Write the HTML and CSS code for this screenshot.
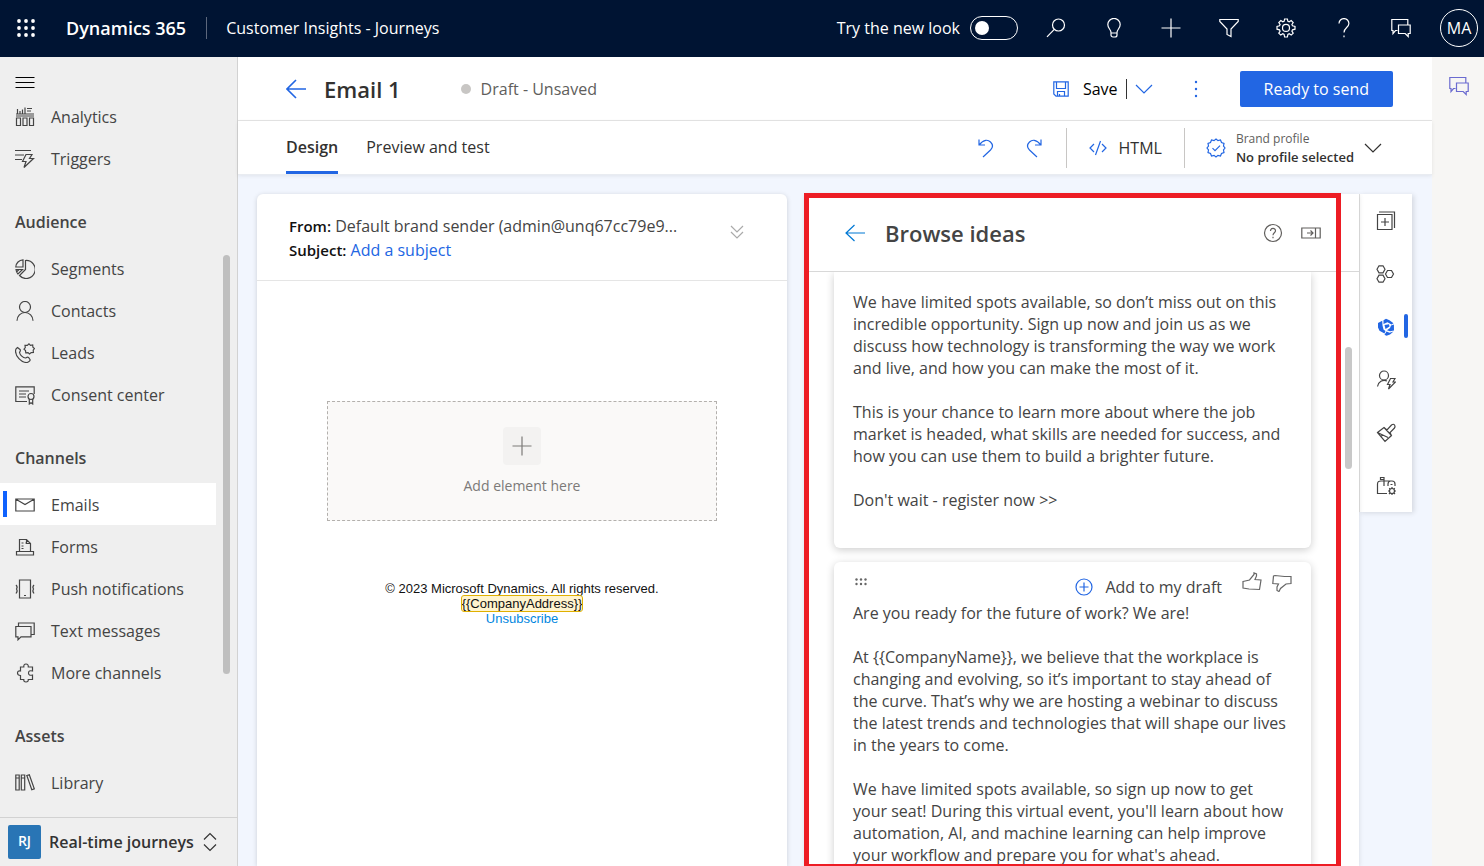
FILE: index.html
```html
<!DOCTYPE html>
<html lang="en">
<head>
<meta charset="utf-8">
<meta name="viewport" content="width=device-width, initial-scale=1">
<title>Email 1 - Customer Insights - Journeys</title>
<link rel="stylesheet" href="styles.css">
</head>
<body>
<header class="topbar">
  <button class="icon-btn waffle" aria-label="App launcher">
    <svg class="fill" width="20" height="20" viewBox="0 0 20 20"><g><circle cx="3" cy="3" r="1.900"/><circle cx="10" cy="3" r="1.900"/><circle cx="17" cy="3" r="1.900"/><circle cx="3" cy="10" r="1.900"/><circle cx="10" cy="10" r="1.900"/><circle cx="17" cy="10" r="1.900"/><circle cx="3" cy="17" r="1.900"/><circle cx="10" cy="17" r="1.900"/><circle cx="17" cy="17" r="1.900"/></g></svg>
  </button>
  <a class="brand" href="#">Dynamics 365</a>
  <a class="app-name" href="#">Customer Insights - Journeys</a>
  <label class="look"><span>Try the new look</span><input class="toggle" type="checkbox" role="switch"></label>
  <div class="top-icons">
    <button class="icon-btn" aria-label="Search"><svg width="20" height="20" viewBox="0 0 20 20"><circle cx="12.500" cy="7" r="6"/><path d="M8.300 11.300 1 18.800"/></svg></button>
    <button class="icon-btn" aria-label="Tips"><svg width="20" height="20" viewBox="0 0 20 20"><path d="M7 14.500C7 11.500 3.800 10.300 3.800 6.600a6.200 6.200 0 0 1 12.400 0C16.200 10.300 13 11.500 13 14.500v2.500a2 2 0 0 1-2 2H9a2 2 0 0 1-2-2zM7 15h6"/></svg></button>
    <button class="icon-btn" aria-label="New"><svg width="20" height="20" viewBox="0 0 20 20"><path d="M10 .5v19M.5 10h19"/></svg></button>
    <button class="icon-btn" aria-label="Filter"><svg width="20" height="20" viewBox="0 0 20 20"><path d="M.8 1.500h18.400v2L12 11v7.500l-4-2V11L.8 3.500z"/></svg></button>
    <button class="icon-btn" aria-label="Settings"><svg width="20" height="20" viewBox="0 0 20 20"><path d="M8.600 1h2.800l.5 2.300 1.300.5 2-1.300 2 2-1.300 2 .6 1.300 2.500.6v2.800l-2.500.6-.6 1.300 1.300 2-2 2-2-1.300-1.300.6-.5 2.600H8.600l-.5-2.600-1.300-.6-2 1.300-2-2 1.300-2-.6-1.300L1 11.200V8.400l2.500-.6.6-1.300-1.300-2 2-2 2 1.300 1.300-.5z"/><circle cx="10" cy="9.900" r="3.500"/></svg></button>
    <button class="icon-btn" aria-label="Help"><svg width="20" height="20" viewBox="0 0 20 20"><path d="M5 5.500A4.800 4.800 0 0 1 14.900 5.500C14.900 9.500 10 9.500 10 14.500M10 17.500v1.800"/></svg></button>
    <button class="icon-btn" aria-label="Assistant"><svg width="20" height="20" viewBox="0 0 20 20"><path d="M6.500 12.500h-2l-2.500 3v-3H.8v-11h16v5M7.500 7h11.700v8.500h-2v3l-3-3H7.500z"/></svg></button>
  </div>
  <button class="avatar" aria-label="Account manager">MA</button>
</header>

<div class="shell">
  <aside class="sidebar">
    <button class="icon-btn burger" aria-label="Toggle navigation"><svg width="20" height="12" viewBox="0 0 20 12"><path d="M.5 1.500h19M.5 6.500h19M.5 11.500h19"/></svg></button>
    <nav class="nav" aria-label="Site map">
      <a class="nav-item" href="#"><svg width="20" height="20" viewBox="0 0 20 20"><path d="M1 9h18M1 7h18M2.500 2v5M5 4v3M7.500 2.500V7M10 .5V7M12 1.500h5M12 4h4M1.500 11h4v7.500h-4zM8 11h4v7.500H8zM14.500 11h4v7.500h-4z"/></svg>Analytics</a>
      <a class="nav-item" href="#"><svg width="20" height="20" viewBox="0 0 20 20"><path d="M0 1.500h16M0 6h9M0 10.500h7M11 5.500h6l-2.500 4h4L9 18.500l2-6H7.500z"/></svg>Triggers</a>
      <h2 class="nav-title">Audience</h2>
      <a class="nav-item" href="#"><svg width="20" height="20" viewBox="0 0 20 20"><path d="M10.500 1.500v9l-6 6A9 9 0 1 0 10.500 1.500zM8 .8V8H.8A7.500 7.500 0 0 1 8 .8zM1 10.500h6.500L3 15A8 8 0 0 1 1 10.500zM1.500 13 4 10.500"/></svg>Segments</a>
      <a class="nav-item" href="#"><svg width="20" height="20" viewBox="0 0 20 20"><circle cx="10" cy="6" r="5.500"/><path d="M2 19.800a8 8.300 0 0 1 16 0"/></svg>Contacts</a>
      <a class="nav-item" href="#"><svg width="20" height="20" viewBox="0 0 20 20"><path d="M2.500 4.500 5 6.500c1 1 0 2-.5 3C5 12 8 15 10.500 15c1-.5 2-1.500 3-.5l1.500 2c.5 1-1.500 3-3.500 3C6 19.500.5 13 .5 8c0-2 1-3 2-3.500zM14 .8l1.500 1.600 2.200-.4.200 2.200 1.600 1.300-1.300 1.700.2 2.200-2.200.2L14.500 11l-1.500-1.400-2.200.2-.3-2.200L9 6.200l1.300-1.700L10 2.300l2.300.1z"/></svg>Leads</a>
      <a class="nav-item" href="#"><svg width="20" height="20" viewBox="0 0 20 20"><path d="M12 16.500H.8V1.800h18.400V9M4 6h10M4 9h7M4 12h7"/><circle cx="16" cy="11.500" r="3"/><path d="M14.300 14v5l1.700-1.200 1.700 1.200v-5"/></svg>Consent center</a>
      <h2 class="nav-title">Channels</h2>
      <a class="nav-item active" href="#" aria-current="page"><svg width="20" height="20" viewBox="0 0 20 20"><path d="M.8 4h18.400v12H.8zM1 4.300l9 5.200 9-5.200"/></svg>Emails</a>
      <a class="nav-item" href="#"><svg width="20" height="20" viewBox="0 0 20 20"><path d="M4.500 14V2.500h7l4 4V14M11.500 2.500v4h4M1.500 14.500h17v3.500h-17zM6.500 6h2M6.500 9h2M10 6h.5M6.500 11.500h2"/></svg>Forms</a>
      <a class="nav-item" href="#"><svg width="20" height="20" viewBox="0 0 20 20"><path d="M4.500 1h11v18h-11zM9 16.500h2M1 6q2 2 .5 4Q3 12 1 14.500M19 6q-2 2-.5 4-1.500 2 .5 4.500"/></svg>Push notifications</a>
      <a class="nav-item" href="#"><svg width="20" height="20" viewBox="0 0 20 20"><path d="M3.500 5.500V2h15.700v11.500H16M.8 5.500H16v10.300H6l-3 3v-3H.8z"/></svg>Text messages</a>
      <a class="nav-item" href="#"><svg width="20" height="20" viewBox="0 0 20 20"><path d="M5.500 4h3.300Q8.500 1 11 1t2.300 3h4.200v4q-4-1-4 2t4 2v4.500h-4.200Q13.500 19 11 19t-2.200-2.500H5.500V12.500Q2.500 12.500 2.500 10t3-2z"/></svg>More channels</a>
      <h2 class="nav-title">Assets</h2>
      <a class="nav-item" href="#"><svg width="20" height="20" viewBox="0 0 20 20"><path d="M.8 2h3.400v15H.8zM6.300 2h3.400v15H6.300zM11.800 2.500l2.500-.7 5 14-2.500 1zM1 5h3M6.500 5h3"/></svg>Library</a>
    </nav>
    <div class="nav-thumb"></div>
    <button class="area">
      <span class="area-badge">RJ</span><span>Real-time journeys</span>
      <svg width="16" height="20" viewBox="0 0 16 20"><path d="m2 7.500 6-6 6 6M2 12.500l6 6 6-6"/></svg>
    </button>
  </aside>

  <main class="main">
    <div class="commandbar">
      <button class="icon-btn blue" aria-label="Back"><svg class="thick" width="20" height="20" viewBox="0 0 20 20"><path d="M20 10H1M10 1 1 10l9 9"/></svg></button>
      <h1 class="title">Email 1</h1>
      <span class="status">Draft - Unsaved</span>
      <div class="save-group">
        <button class="save"><svg class="blue" width="16" height="16" viewBox="0 0 16 16"><path d="M1 .8h14.200v14.400H3L.8 13V.8zM3.500 1v6.500h9V1M4.500 15v-4.500h7V15M6.500 13v2"/></svg>Save</button>
        <button class="icon-btn save-more blue" aria-label="More save options"><svg width="18" height="12" viewBox="0 0 18 12"><path d="m1 2 8 8 8-8"/></svg></button>
      </div>
      <button class="icon-btn dots blue" aria-label="More commands"><svg class="fill" width="4" height="18" viewBox="0 0 4 18"><circle cx="2" cy="2" r="1.200"/><circle cx="2" cy="9" r="1.200"/><circle cx="2" cy="16" r="1.200"/></svg></button>
      <button class="primary">Ready to send</button>
    </div>
    <div class="tabbar">
      <div class="tabs" role="tablist">
        <button class="tab selected" role="tab" aria-selected="true">Design</button>
        <button class="tab" role="tab" aria-selected="false">Preview and test</button>
      </div>
      <div class="history">
        <button class="icon-btn blue" aria-label="Undo"><svg width="18" height="20" viewBox="0 0 18 20"><path d="M2 1.500V7h6M2 7c5-6 9-5.500 11.500-3s2.500 5.500 0 8L6 19"/></svg></button>
        <button class="icon-btn blue" aria-label="Redo"><svg width="18" height="20" viewBox="0 0 18 20"><path d="M16 1.500V7h-6M16 7c-5-6-9-5.500-11.500-3s-2.500 5.500 0 8L12 19"/></svg></button>
      </div>
      <button class="html-btn"><svg class="blue" width="18" height="16" viewBox="0 0 18 16"><path d="M5 4 1 8l4 4M13 4l4 4-4 4M11.500 1l-5 14"/></svg>HTML</button>
      <button class="profile">
        <svg class="blue" width="20" height="20" viewBox="0 0 20 20"><path d="m10 1 2 1.600 2.500-.6 1 2.500 2.500.9-.5 2.600L19 10l-1.500 2 .5 2.600-2.500.9-1 2.500-2.500-.6L10 19l-2-1.600-2.500.6-1-2.500-2.500-.9.500-2.600L1 10l1.500-2L2 5.400l2.500-.9 1-2.500 2.500.6zM6.500 10.200l2.500 2.500 5-5"/></svg>
        <span class="profile-text"><span class="profile-label">Brand profile</span><strong>No profile selected</strong></span>
        <svg width="18" height="12" viewBox="0 0 18 12"><path d="m1 2 8 8 8-8"/></svg>
      </button>
    </div>

    <div class="canvas">
      <section class="email" aria-label="Email content">
        <div class="email-head">
          <div class="email-meta">
            <div class="sender"><b>From:</b> Default brand sender (admin@unq67cc79e9...</div>
            <div><b>Subject:</b> <a href="#">Add a subject</a></div>
          </div>
          <button class="icon-btn expand" aria-label="Expand header"><svg width="14" height="14" viewBox="0 0 14 14"><path d="m1 1 6 6 6-6M1 7l6 6 6-6"/></svg></button>
        </div>
        <div class="email-body">
          <button class="drop">
            <span class="drop-plus"><svg width="20" height="20" viewBox="0 0 20 20"><path d="M10 .5v19M.5 10h19"/></svg></span>
            Add element here
          </button>
          <div class="email-footer">
            <div>© 2023 Microsoft Dynamics. All rights reserved.</div>
            <div><span class="token">{{CompanyAddress}}</span></div>
            <div><a href="#">Unsubscribe</a></div>
          </div>
        </div>
      </section>

      <section class="panel" aria-label="Browse ideas">
        <div class="panel-head">
          <button class="icon-btn azure" aria-label="Back"><svg width="20" height="18" viewBox="0 0 20 18"><path d="M20 9H1M9.500 1 1 9l8.500 8"/></svg></button>
          <h2 class="panel-title">Browse ideas</h2>
          <button class="icon-btn" aria-label="Help"><svg width="20" height="20" viewBox="0 0 20 20"><circle cx="10" cy="10" r="8.500"/><path d="M7.500 8a2.500 2.500 0 0 1 5-.2c0 2-2.500 2-2.500 4.400M10 13.800v1.400"/></svg></button>
          <button class="icon-btn" aria-label="Collapse pane"><svg width="20" height="12" viewBox="0 0 20 12"><path d="M.8 1h18.400v10H.8zM14.500 1v10M6 6h6M9.500 3.500 12 6 9.500 8.500"/></svg></button>
        </div>
        <div class="ideas">
          <article class="idea idea-first">
            <p>We have limited spots available, so don’t miss out on this incredible opportunity. Sign up now and join us as we discuss how technology is transforming the way we work and live, and how you can make the most of it.</p>
            <p>This is your chance to learn more about where the job market is headed, what skills are needed for success, and how you can use them to build a brighter future.</p>
            <p>Don't wait - register now &gt;&gt;</p>
          </article>
          <article class="idea">
            <div class="idea-bar">
              <svg class="fill grip" width="12" height="8" viewBox="0 0 12 8"><g><circle cx="1.500" cy="1.500" r="1.200"/><circle cx="6" cy="1.500" r="1.200"/><circle cx="10.500" cy="1.500" r="1.200"/><circle cx="1.500" cy="6" r="1.200"/><circle cx="6" cy="6" r="1.200"/><circle cx="10.500" cy="6" r="1.200"/></g></svg>
              <button class="add-draft"><svg class="blue" width="18" height="18" viewBox="0 0 18 18"><circle cx="9" cy="9" r="8"/><path d="M9 4.500v9M4.500 9h9"/></svg>Add to my draft</button>
              <div class="votes">
                <button class="icon-btn" aria-label="Like"><svg width="20" height="20" viewBox="0 0 20 20"><path d="M1 9.500 7.500 8 12 2.500V1l2.500 1v2L13 7.500l6 .5-1.500 9.500L7 17l-6-1z"/></svg></button>
                <button class="icon-btn" aria-label="Dislike"><svg width="20" height="20" viewBox="0 0 20 20"><path d="M1.500 4 3 3.500 12.500 4.500 19 4.500v7l-5 .5L8.500 16.500 7 19.500 5 18.500v-3.500L6.500 12 .8 11.500z"/></svg></button>
              </div>
            </div>
            <p>Are you ready for the future of work? We are!</p>
            <p>At {{CompanyName}}, we believe that the workplace is changing and evolving, so it’s important to stay ahead of the curve. That’s why we are hosting a webinar to discuss the latest trends and technologies that will shape our lives in the years to come.</p>
            <p>We have limited spots available, so sign up now to get your seat! During this virtual event, you'll learn about how automation, AI, and machine learning can help improve your workflow and prepare you for what's ahead.</p>
          </article>
        </div>
        <div class="panel-thumb"></div>
        <div class="highlight"></div>
      </section>

      <div class="toolbox" role="toolbar" aria-label="Toolbox">
        <button class="tool" aria-label="Elements"><svg width="20" height="20" viewBox="0 0 20 20"><path d="M1.500 3.500h14.500v15H1.500zM3 1h15.500v16M9 7v8M5 11h8"/></svg></button>
        <button class="tool" aria-label="Conditions"><svg width="20" height="20" viewBox="0 0 20 20"><path d="M3 1.800h4L9 5.300 7 8.800H3L1 5.300zM3 11.200h4l2 3.500-2 3.500H3l-2-3.500zM11.500 6.500h4l2 3.500-2 3.500h-4l-2-3.500z"/></svg></button>
        <button class="tool current" aria-label="Browse ideas"><svg class="fill" width="18" height="18" viewBox="0 0 18 18"><path d="M9 .8 12.500 2.200 16.500 5.200 14.500 6.500 10.500 4.200 6.500 6V2.200zM5.200 2.800 5.500 7.500 6.500 11.500 8.500 13 7.500 15.500 2.500 12.800 1 9.500V5zM16.900 6.500 17 12.500l-4 .8-3-1 3-2.300 1-2.500zM7.500 7l4.500-.7.5 2.200L8.500 11zM9.500 13.500l3 1.200 4-1.200-3.500 3-3.500 1.200-2-1z"/></svg></button>
        <button class="tool" aria-label="Personalization"><svg width="20" height="20" viewBox="0 0 20 20"><circle cx="8" cy="5.500" r="4.500"/><path d="M1.500 16.500A6.800 7 0 0 1 11 11M14.500 8.500H19l-2 3.500h2.500L12.500 19l1.500-4.500h-2.500z"/></svg></button>
        <button class="tool" aria-label="Theme"><svg width="20" height="20" viewBox="0 0 20 20"><path d="M1.500 9.500 8 4.500l3 2.500L15.500 2q2-1.500 3 0t0 3L14 9.500l1.500 3L9 18.500zM8 4.500l7.500 8M1.500 9.500l10.500 5M5 13l2.500-.8"/></svg></button>
        <button class="tool" aria-label="Email settings"><svg width="20" height="20" viewBox="0 0 20 20"><path d="M11 17.500H1.500V8Q1.500 5 5 5h11q3 0 3 3v2M8 10V1.500H4.500v2H8M12 10V8q0-2.500 2.500-3M14.500 8.500h2"/><circle cx="16" cy="15" r="2.500"/><path d="M16 11v1.500M16 17.500V19M12 15h1.500M18.500 15H20M13.200 12.200l1 1M18 17l1 1M18.800 12.200l-1 1M14 17l-1 1"/></svg></button>
      </div>
    </div>
  </main>

  <aside class="rail"><button class="icon-btn purple" aria-label="Copilot"><svg width="20" height="20" viewBox="0 0 20 20"><path d="M6.500 12.500h-2l-2.500 3v-3H.8v-11h16v5M7.500 7h11.700v8.500h-2v3l-3-3H7.500z"/></svg></button></aside>
</div>
</body>
</html>
```
FILE: styles.css
```css
* { box-sizing: border-box; }

body {
  margin: 0;
  height: 100vh;
  display: flex;
  flex-direction: column;
  overflow: hidden;
  font-family: "Open Sans", "Noto Sans", sans-serif;
  font-size: 16px;
  line-height: 22px;
  color: #444;
  background: #fff;
}

button {
  font: inherit;
  color: inherit;
  background: none;
  border: 0;
  padding: 0;
  cursor: pointer;
}

a { color: inherit; text-decoration: none; }
h1, h2, p { margin: 0; }

svg {
  display: block;
  flex: none;
  fill: none;
  stroke: currentColor;
  stroke-width: 1.2;
}
svg.fill { fill: currentColor; stroke: none; }
svg.thick { stroke-width: 1.6; }

.icon-btn { display: flex; align-items: center; justify-content: center; }
.blue { color: #2266e3; }
.azure { color: #0078d4; }
.purple { color: #6b6bd0; }

/* Top bar */
.topbar {
  flex: none;
  height: 57px;
  display: flex;
  align-items: center;
  padding: 0 6px 1px 16px;
  color: #fff;
  background: #001433;
}
.brand {
  margin-left: 30px;
  padding-right: 20px;
  border-right: 1px solid #5c677c;
  font-size: 18px;
  font-weight: 600;
}
.app-name { margin-left: 19px; }
.look { margin-left: auto; display: flex; align-items: center; gap: 10px; }
.toggle {
  appearance: none;
  display: flex;
  align-items: center;
  width: 48px;
  height: 24px;
  margin: 0;
  padding: 0 4px;
  border: 1px solid #fff;
  border-radius: 12px;
}
.toggle::before {
  content: "";
  width: 14px;
  height: 14px;
  border-radius: 50%;
  background: #fff;
}
.toggle:checked { justify-content: flex-end; }
.top-icons {
  width: 365px;
  margin: 0 29px 0 28px;
  display: flex;
  justify-content: space-between;
}
.avatar {
  width: 38px;
  height: 38px;
  border: 1px solid #fff;
  border-radius: 50%;
}

.shell { flex: 1; min-height: 0; display: flex; }

/* Site map */
.sidebar {
  position: relative;
  flex: none;
  width: 238px;
  display: flex;
  flex-direction: column;
  border-right: 1px solid #d2d2d2;
  background: #efefef;
}
.burger { width: 20px; height: 38px; margin-left: 15px; padding-top: 12px; color: #000; }
.nav { flex: 1; min-height: 0; overflow: hidden; margin-right: 21px; }
.nav-item {
  position: relative;
  height: 42px;
  display: flex;
  align-items: center;
  gap: 16px;
  padding: 1px 0 0 15px;
}
.nav-title {
  height: 68px;
  padding: 32px 15px 0;
  font-size: 16px;
  font-weight: 600;
}
.active { background: #fff; }
.active::before {
  content: "";
  position: absolute;
  left: 3px;
  top: 8px;
  bottom: 8px;
  width: 4px;
  background: #0f62fe;
}
.nav-thumb {
  position: absolute;
  right: 7px;
  top: 198px;
  bottom: 192px;
  width: 7px;
  border-radius: 4px;
  background: #bfbfbf;
}
.area {
  height: 49px;
  display: flex;
  align-items: center;
  gap: 8px;
  padding: 0 8px;
  border-top: 1px solid #d2d2d2;
  font-weight: 600;
  color: #333;
}
.area-badge {
  width: 33px;
  height: 34px;
  border-radius: 2px;
  font-size: 14px;
  line-height: 32px;
  color: #fff;
  background: #2975b5;
}

/* Form header */
.main { flex: 1; min-width: 0; display: flex; flex-direction: column; }
.commandbar {
  flex: none;
  height: 64px;
  display: flex;
  align-items: center;
  padding: 0 39px 0 48px;
  border-bottom: 1px solid #e5e5e5;
}
.title { margin-left: 18px; font-size: 22px; font-weight: 600; line-height: 30px; color: #323130; }
.status { display: flex; align-items: center; gap: 10px; margin-left: 60px; color: #605e5c; }
.status::before { content: ""; width: 10px; height: 10px; border-radius: 50%; background: #c8c6c4; }
.save-group { margin-left: auto; display: flex; align-items: center; gap: 8px; }
.save { display: flex; align-items: center; gap: 14px; color: #000; }
.save-more { height: 20px; padding-left: 8px; border-left: 1px solid #333; }
.dots { margin-left: 41px; }
.primary {
  height: 36px;
  margin-left: 42px;
  padding: 0 24px;
  border-radius: 2px;
  color: #fff;
  background: #2266e3;
}
.tabbar {
  position: relative;
  flex: none;
  height: 54px;
  display: flex;
  align-items: center;
  padding: 0 50px 0 48px;
  border-bottom: 1px solid #e9ecf1;
  box-shadow: 0 1px 4px rgba(0, 0, 0, .08);
  background: #fff;
}
.tabs { align-self: stretch; display: flex; gap: 28px; margin-right: auto; }
.tab { padding-top: 2px; border-bottom: 3px solid transparent; color: #323130; }
.selected { border-bottom-color: #2266e3; font-weight: 600; }
.history { display: flex; gap: 30px; padding-right: 23px; }
.html-btn, .profile { height: 40px; display: flex; align-items: center; border-left: 1px solid #c8c6c4; color: #323130; }
.html-btn { gap: 12px; padding: 0 22px; }
.profile { gap: 10px; padding-left: 21px; }
.profile-text { display: flex; flex-direction: column; text-align: left; font-size: 13px; line-height: 18px; }
.profile-label { font-size: 12px; color: #605e5c; }
.profile strong { font-weight: 600; }

/* Designer */
.canvas {
  flex: 1;
  min-height: 0;
  display: flex;
  padding: 19px 20px 0 19px;
  background: #f2f6fe;
}
.email {
  flex: 1;
  min-width: 0;
  margin-right: 18px;
  border-radius: 6px 6px 0 0;
  box-shadow: 0 1px 5px rgba(0, 0, 0, .16);
  background: #fff;
}
.email-head {
  height: 87px;
  display: flex;
  align-items: center;
  padding: 2px 43px 0 32px;
  border-bottom: 1px solid #e5e5e5;
}
.email-meta { flex: 1; min-width: 0; line-height: 24px; }
.sender { white-space: nowrap; }
.email-meta b { font-size: 15px; font-weight: 600; color: #111; }
.email-meta a { color: #2266e3; }
.expand { margin-bottom: 12px; color: #aaa; }
.email-body { padding: 120px 70px 0; }
.drop {
  width: 100%;
  height: 120px;
  display: flex;
  flex-direction: column;
  align-items: center;
  justify-content: center;
  gap: 10px;
  padding-top: 2px;
  border: 1px dashed #b3b0ad;
  font-size: 14px;
  color: #7c7a78;
  background: #faf9f8;
}
.drop-plus { padding: 9px; border-radius: 4px; background: #f3f2f1; }
.email-footer {
  margin-top: 60px;
  text-align: center;
  font: 13px/15px "Liberation Sans", Arial, sans-serif;
  color: #111;
}
.email-footer a { color: #0086e0; }
.token { border-radius: 2px; outline: 1px solid #e0b000; background: #fff4ce; }

.panel {
  position: relative;
  flex: none;
  width: 554px;
  display: flex;
  flex-direction: column;
  box-shadow: 0 1px 5px rgba(0, 0, 0, .12);
  background: #fff;
}
.panel-head {
  flex: none;
  height: 78px;
  display: flex;
  align-items: center;
  gap: 18px;
  padding: 0 38px 0 40px;
  border-bottom: 1px solid #d8d8d8;
  color: #605e5c;
}
.panel-title { flex: 1; margin-left: 2px; font-size: 22px; font-weight: 600; line-height: 30px; color: #444; }
.ideas {
  flex: 1;
  min-height: 0;
  overflow: hidden;
  display: flex;
  flex-direction: column;
  gap: 14px;
  padding: 0 48px 0 29px;
}
.idea {
  flex: none;
  padding: 0 19px 37px;
  border-radius: 6px;
  box-shadow: 0 2px 8px rgba(0, 0, 0, .2);
  background: #fff;
}
.idea-first { padding-top: 19px; border-radius: 0 0 6px 6px; }
.idea p { padding-right: 4px; }
.idea p + p { margin-top: 22px; }
.idea-bar { height: 40px; display: flex; align-items: center; color: #666; }
.grip { margin: 0 auto 0 2px; }
.add-draft { display: flex; align-items: center; gap: 12px; padding-top: 10px; color: #444; }
.votes { display: flex; gap: 10px; margin-left: 20px; }
.panel-thumb {
  position: absolute;
  right: 7px;
  top: 153px;
  width: 7px;
  height: 122px;
  border-radius: 4px;
  background: #c8c8c8;
}
/* Callout frame around the ideas list */
.highlight {
  position: absolute;
  inset: -1px 18px 0 -1px;
  border: 5px solid #ed1c24;
  border-bottom-width: 2px;
  pointer-events: none;
}

.toolbox {
  flex: none;
  align-self: flex-start;
  width: 53px;
  border-left: 1px solid #e1e1e1;
  box-shadow: 2px 1px 5px rgba(0, 0, 0, .12);
  background: #fff;
}
.tool {
  position: relative;
  width: 100%;
  height: 53px;
  display: flex;
  align-items: center;
  justify-content: center;
}
.current { color: #2266e3; }
.current::after {
  content: "";
  position: absolute;
  right: 4px;
  top: 14px;
  width: 4px;
  height: 24px;
  border-radius: 2px;
  background: #2266e3;
}

.rail { flex: none; width: 52px; padding: 19px 0 0 17px; background: #f7f6f4; }
```
